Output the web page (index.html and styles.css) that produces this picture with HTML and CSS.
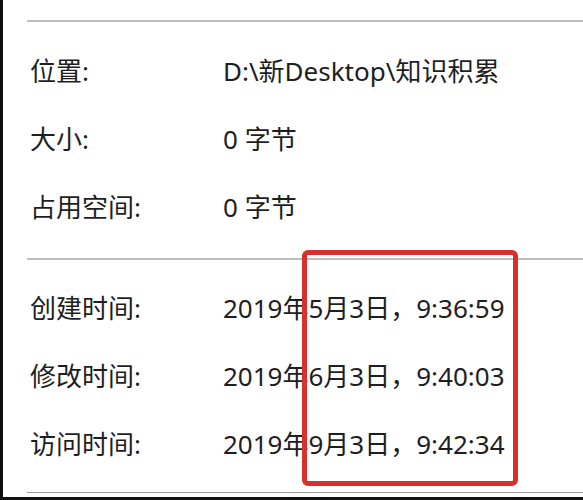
FILE: index.html
```html
<!DOCTYPE html>
<html lang="zh-CN">
<head>
    <meta charset="UTF-8">
    <meta name="viewport" content="width=device-width, initial-scale=1.0">
    <title>属性</title>
    <link rel="stylesheet" href="styles.css">
</head>
<body>
    <div class="window">
        <div class="panel">
            <hr class="sep">

            <div class="group">
                <div class="row">
                    <span class="label">位置:</span>
                    <span class="value">D:\新Desktop\知识积累</span>
                </div>
                <div class="row">
                    <span class="label">大小:</span>
                    <span class="value">0 字节</span>
                </div>
                <div class="row">
                    <span class="label">占用空间:</span>
                    <span class="value">0 字节</span>
                </div>
            </div>

            <hr class="sep">

            <div class="group times">
                <div class="row">
                    <span class="label">创建时间:</span>
                    <span class="value">2019年5月3日，9:36:59</span>
                </div>
                <div class="row">
                    <span class="label">修改时间:</span>
                    <span class="value">2019年6月3日，9:40:03</span>
                </div>
                <div class="row">
                    <span class="label">访问时间:</span>
                    <span class="value">2019年9月3日，9:42:34</span>
                </div>

                <!-- annotation drawn over the screenshot -->
                <div class="highlight"></div>
            </div>

            <hr class="sep bottom">
        </div>
    </div>
</body>
</html>
```

FILE: styles.css
```css
* {
    margin: 0;
    padding: 0;
    box-sizing: border-box;
}

html, body {
    height: 100%;
}

body {
    font-family: 'Noto Sans', 'Noto Sans CJK SC', sans-serif;
    background: #111;
    color: #1e1e1e;
    overflow: hidden;
}

.window {
    height: 497px;
    margin-left: 3px;
    background: #fff;
}

.panel {
    padding-top: 20px;
    padding-left: 24px;
}

.sep {
    border: none;
    height: 2px;
    background: #bdbdbd;
}

.sep.bottom {
    margin-top: 15px;
    height: 1px;
    background: #9a9a9a;
}

.group {
    padding: 14px 0 18px;
    position: relative;
}

.times {
    padding: 13px 0 0;
}

.row {
    display: flex;
    align-items: center;
    height: 68px;
    padding-left: 3px;
    font-size: 26px;
}

.label {
    width: 193px;
    flex-shrink: 0;
}

.value {
    white-space: nowrap;
}

.highlight {
    position: absolute;
    left: 275px;
    top: -10px;
    width: 216px;
    height: 236px;
    border: 5px solid #d8302c;
    border-radius: 6px;
}
```
